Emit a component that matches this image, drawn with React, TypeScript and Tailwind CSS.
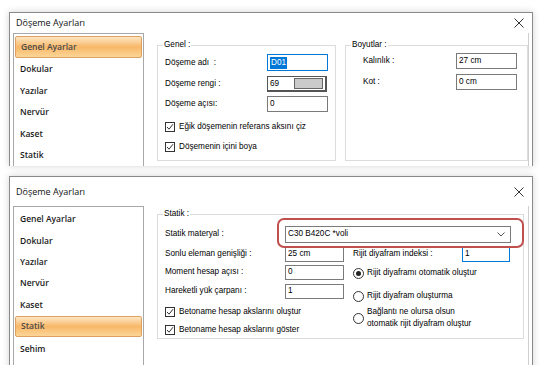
import React from "react";

const items = ["Genel Ayarlar", "Dokular", "Yazılar", "Nervür", "Kaset", "Statik", "Sehim"];

function CloseX() {
  return (
    <svg width="10" height="10" viewBox="0 0 10 10" className="text-[#333]">
      <path d="M0.5 0.5 L9.5 9.5 M9.5 0.5 L0.5 9.5" stroke="currentColor" strokeWidth="1" />
    </svg>
  );
}

function TitleBar({ h }: { h: string }) {
  return (
    <div className={`flex items-center justify-between pl-[6px] pr-[8px] ${h}`}>
      <span className="font-['Open_Sans',sans-serif] text-[9px] text-[#111]">Döşeme Ayarları</span>
      <CloseX />
    </div>
  );
}

function SideList({ selected, count }: { selected: number; count: number }) {
  return (
    <div className="ml-[3px] w-[131px] shrink-0 border-l border-r border-t border-[#a8a8a8] px-[1px] pt-[2px]">
      {items.slice(0, count).map((it, i) => (
        <div
          key={it}
          className={`flex h-[21.4px] w-[127px] items-center pl-[5px] font-['Open_Sans',sans-serif] text-[8.5px] font-semibold ${
            i === selected
              ? "h-[20px] mb-[1.4px] rounded-[2px] border border-[#dca264] bg-gradient-to-b from-[#fde6c2] via-[#f8b867] to-[#fbd597] text-[#4a4a4a]"
              : "text-[#1a1a1a]"
          }`}
        >
          {it}
        </div>
      ))}
    </div>
  );
}

function Check({ label }: { label: string }) {
  return (
    <div className="flex h-[10px] items-center pl-[7px]">
      <div className="flex h-[10px] w-[10px] items-center justify-center border border-[#333] bg-white">
        <svg width="8" height="8" viewBox="0 0 8 8">
          <path d="M1 4 L3 6.2 L7 1.2" fill="none" stroke="#333" strokeWidth="1" />
        </svg>
      </div>
      <span className="ml-[4px]">{label}</span>
    </div>
  );
}

function Radio({ checked }: { checked?: boolean }) {
  return (
    <div className="flex h-[11px] w-[11px] shrink-0 items-center justify-center rounded-full border border-[#333] bg-white">
      {checked && <div className="h-[5px] w-[5px] rounded-full bg-[#222]" />}
    </div>
  );
}

function Field({ value, w, h, focus }: { value: string; w: string; h: string; focus?: boolean }) {
  return (
    <div
      className={`flex items-center border bg-white pl-[2px] ${w} ${h} ${
        focus ? "border-[#0078d7]" : "border-[#7a7a7a]"
      }`}
    >
      {value}
    </div>
  );
}

function TopDialog() {
  return (
    <div className="flex h-[154px] w-[524px] flex-col border border-b-0 border-[#8a8a8a] bg-white shadow-[0_0_7px_rgba(0,0,0,0.18)]">
      <TitleBar h="h-[27px]" />
      <div className="flex flex-1">
        <SideList selected={0} count={6} />
        <div className="mr-[3px] ml-[13px] flex flex-1 gap-[9px] border-r border-[#cfcfcf] pt-[7px]">
          <fieldset className="h-[121px] w-[179px] border border-[#dcdcdc]">
            <legend className="ml-[5px] px-[1px] leading-[10px]">Genel :</legend>
            <div className="flex flex-col pt-[4px]">
              <div className="flex h-[17px] items-center pl-[7px]">
                <span className="w-[102px]">Döşeme adı&nbsp; :</span>
                <div className="flex h-[17px] w-[61px] items-center border border-[#0078d7] bg-white pl-[2px]">
                  <span className="bg-[#0078d7] px-[1px] text-white">D01</span>
                </div>
              </div>
              <div className="mt-[5px] flex h-[16px] items-center pl-[7px]">
                <span className="w-[102px]">Döşeme rengi :</span>
                <div className="flex h-[16px] w-[60px] items-stretch border border-b-2 border-r-2 border-[#555] bg-white">
                  <span className="flex w-[26px] items-center pl-[2px]">69</span>
                  <div className="my-[1px] mr-[2px] flex-1 border border-[#666] bg-[#cacaca]" />
                </div>
              </div>
              <div className="mt-[4px] flex h-[16px] items-center pl-[7px]">
                <span className="w-[102px]">Döşeme açısı:</span>
                <Field value="0" w="w-[61px]" h="h-[16px]" />
              </div>
              <div className="mt-[10px]">
                <Check label="Eğik döşemenin referans aksını çiz" />
              </div>
              <div className="mt-[10px]">
                <Check label="Döşemenin içini boya" />
              </div>
            </div>
          </fieldset>
          <fieldset className="h-[121px] flex-1 border border-[#dcdcdc]">
            <legend className="ml-[5px] px-[1px] leading-[10px]">Boyutlar :</legend>
            <div className="flex flex-col pt-[3px]">
              <div className="flex h-[16px] items-center pl-[17px]">
                <span className="w-[93px]">Kalınlık :</span>
                <Field value="27 cm" w="w-[61px]" h="h-[16px]" />
              </div>
              <div className="mt-[5px] flex h-[16px] items-center pl-[17px]">
                <span className="w-[93px]">Kot :</span>
                <Field value="0 cm" w="w-[61px]" h="h-[16px]" />
              </div>
            </div>
          </fieldset>
        </div>
      </div>
    </div>
  );
}

function BottomDialog() {
  return (
    <div className="mt-[10px] flex h-[200px] w-[524px] flex-col border border-b-0 border-[#8a8a8a] bg-white shadow-[0_0_7px_rgba(0,0,0,0.18)]">
      <TitleBar h="h-[29px]" />
      <div className="flex flex-1">
        <SideList selected={5} count={7} />
        <div className="mr-[3px] ml-[13px] flex flex-1 border-r border-[#cfcfcf] pt-[3px]">
          <fieldset className="h-[130px] w-[367px] border border-[#dcdcdc]">
            <legend className="ml-[5px] px-[1px] leading-[10px]">Statik :</legend>
            <div className="flex flex-col pt-[7px]">
              <div className="flex h-[17px] items-center pl-[7px]">
                <span className="w-[120px]">Statik materyal :</span>
                <div className="relative">
                  <div className="flex h-[17px] w-[226px] items-center justify-between border border-[#7a7a7a] bg-white pr-[5px] pl-[2px]">
                    <span>C30 B420C *voli</span>
                    <svg width="8" height="5" viewBox="0 0 8 5">
                      <path d="M0.5 0.5 L4 4 L7.5 0.5" fill="none" stroke="#555" strokeWidth="1" />
                    </svg>
                  </div>
                  <div className="absolute -top-[8px] -right-[13px] -bottom-[5px] -left-[8px] rounded-[7px] border-2 border-[#c0504d]" />
                </div>
              </div>
              <div className="flex">
                <div className="flex w-[195px] flex-col">
                  <div className="mt-[4px] flex h-[15px] items-center pl-[7px]">
                    <span className="w-[120px]">Sonlu eleman genişliği :</span>
                    <Field value="25 cm" w="w-[59px]" h="h-[15px]" />
                  </div>
                  <div className="mt-[3px] flex h-[15px] items-center pl-[7px]">
                    <span className="w-[120px]">Moment hesap açısı :</span>
                    <Field value="0" w="w-[59px]" h="h-[15px]" />
                  </div>
                  <div className="mt-[4px] flex h-[15px] items-center pl-[7px]">
                    <span className="w-[120px]">Hareketli yük çarpanı :</span>
                    <Field value="1" w="w-[59px]" h="h-[15px]" />
                  </div>
                  <div className="mt-[8px]">
                    <Check label="Betoname hesap akslarını oluştur" />
                  </div>
                  <div className="mt-[8px]">
                    <Check label="Betoname hesap akslarını göster" />
                  </div>
                </div>
                <div className="flex flex-col">
                  <div className="mt-[4px] flex h-[15px] items-center">
                    <span className="w-[109px]">Rijit diyafram indeksi :</span>
                    <Field value="1" w="w-[48px]" h="h-[15px]" focus />
                  </div>
                  <div className="mt-[5px] flex h-[12px] items-center gap-[3px]">
                    <Radio checked />
                    <span>Rijit diyaframı otomatik oluştur</span>
                  </div>
                  <div className="mt-[11px] flex h-[12px] items-center gap-[3px]">
                    <Radio />
                    <span>Rijit diyafram oluşturma</span>
                  </div>
                  <div className="mt-[4px] flex items-center gap-[3px]">
                    <Radio />
                    <span className="leading-[12px]">
                      Bağlantı ne olursa olsun
                      <br />
                      otomatik rijit diyafram oluştur
                    </span>
                  </div>
                </div>
              </div>
            </div>
          </fieldset>
        </div>
      </div>
    </div>
  );
}

export default function App() {
  return (
    <div className="h-[365px] w-[542px] overflow-hidden bg-white font-['Liberation_Sans',Arial,sans-serif] text-[8.2px] text-black">
      <div className="flex flex-col pt-[12px] pl-[9px]">
        <TopDialog />
        <BottomDialog />
      </div>
    </div>
  );
}
